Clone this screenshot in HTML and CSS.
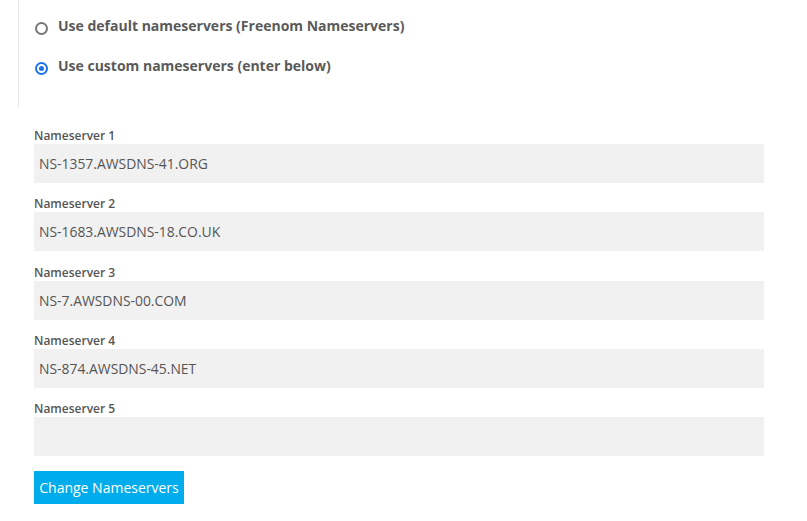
FILE: index.html
```html
<!DOCTYPE html>
<html>
<head>
<meta charset="utf-8">
<link rel="stylesheet" href="styles.css">
</head>
<body>
<div class="options">
  <label class="opt">
    <span class="radio"></span>
    <span class="opt-text">Use default nameservers (Freenom Nameservers)</span>
  </label>
  <label class="opt">
    <span class="radio checked"></span>
    <span class="opt-text">Use custom nameservers (enter below)</span>
  </label>
</div>
<form class="ns-form">
  <div class="field">
    <div class="lbl">Nameserver 1</div>
    <div class="input">NS-1357.AWSDNS-41.ORG</div>
  </div>
  <div class="field">
    <div class="lbl">Nameserver 2</div>
    <div class="input">NS-1683.AWSDNS-18.CO.UK</div>
  </div>
  <div class="field">
    <div class="lbl">Nameserver 3</div>
    <div class="input">NS-7.AWSDNS-00.COM</div>
  </div>
  <div class="field">
    <div class="lbl">Nameserver 4</div>
    <div class="input">NS-874.AWSDNS-45.NET</div>
  </div>
  <div class="field">
    <div class="lbl">Nameserver 5</div>
    <div class="input"></div>
  </div>
  <div class="btn">Change Nameservers</div>
</form>
</body>
</html>
```
FILE: styles.css
```css
html, body {
  margin: 0;
  padding: 0;
  background: #fff;
  font-family: "Open Sans", "Liberation Sans", sans-serif;
}
.options {
  margin-left: 18px;
  border-left: 1px solid #e6e6e6;
  height: 107px;
  padding-left: 16px;
  padding-top: 16px;
  box-sizing: border-box;
  display: flex;
  flex-direction: column;
  gap: 20px;
}
.opt {
  display: flex;
  align-items: center;
  height: 20px;
  gap: 10px;
}
.radio {
  width: 13px;
  height: 13px;
  box-sizing: border-box;
  border: 2px solid #757575;
  border-radius: 50%;
  margin-top: 4px;
  position: relative;
}
.radio.checked {
  border-color: #1a73e8;
}
.radio.checked::after {
  content: "";
  position: absolute;
  left: 2px;
  top: 2px;
  width: 5px;
  height: 5px;
  border-radius: 50%;
  background: #1a73e8;
}
.opt-text {
  font-size: 14px;
  font-weight: 700;
  color: #5a5a5a;
  line-height: 20px;
}
.ns-form {
  padding: 20px 43px 0 34px;
  display: flex;
  flex-direction: column;
  gap: 12.25px;
}
.field {
  display: flex;
  flex-direction: column;
}
.lbl {
  font-size: 12px;
  font-weight: 600;
  color: #555;
  line-height: 17px;
}
.input {
  height: 39px;
  background: #f1f1f1;
  font-size: 13.9px;
  color: #555;
  line-height: 39px;
  padding-left: 5px;
}
.btn {
  align-self: flex-start;
  margin-top: 3px;
  width: 150px;
  height: 33px;
  background: #00acec;
  color: #fff;
  font-size: 14px;
  line-height: 33px;
  text-align: center;
}
```
